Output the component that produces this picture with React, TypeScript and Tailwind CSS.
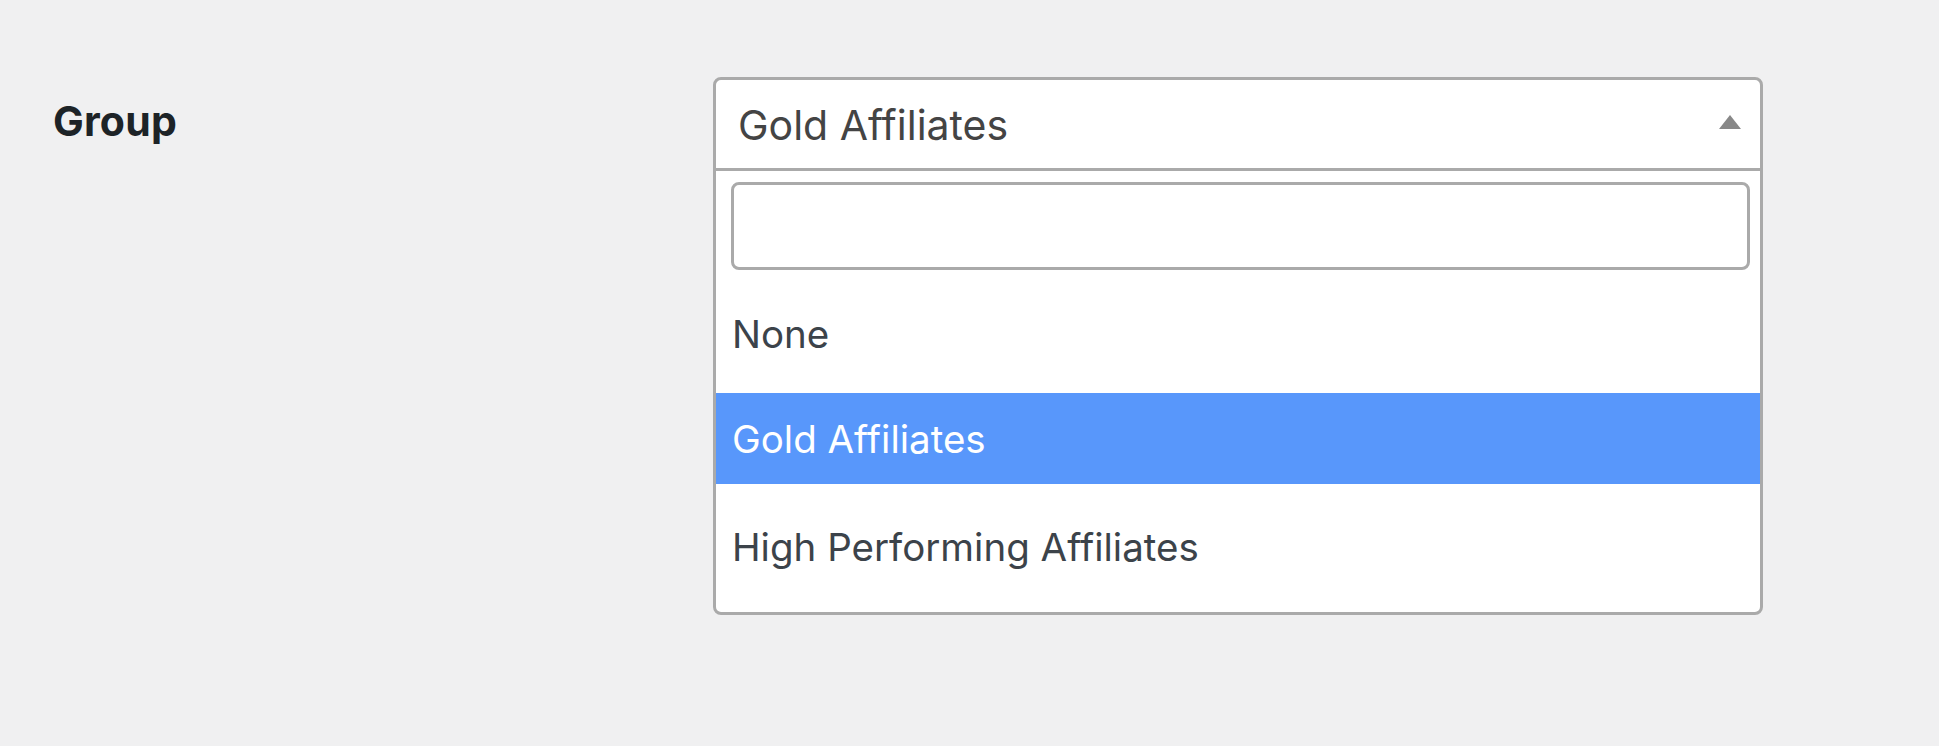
import { useState } from 'react';

const options = ['None', 'Gold Affiliates', 'High Performing Affiliates'];

const App = () => {
  const [selected] = useState('Gold Affiliates');
  const [query, setQuery] = useState('');

  return (
    <div className="min-h-[746px] bg-[#f0f0f1] flex items-start pt-[77px] pl-[53px] font-['Inter',sans-serif]">
      <div className="w-[660px] pt-[19px] text-[41px] leading-[50px] font-bold text-[#1d2327] tracking-[0.2px]">Group</div>

      <div className="w-[1050px] bg-white border-[3px] border-[#aaaaaa] rounded-[8px] overflow-hidden">
        {/* current value */}
        <div className="h-[91px] flex items-center justify-between pl-[22px] pr-[18px] border-b-[3px] border-[#aaaaaa]">
          <span className="text-[41px] leading-[50px] text-[#444444] pt-[1px]">{selected}</span>
          <svg width="24" height="16" viewBox="0 0 24 16" className="-mt-[5px]">
            <polygon points="12,1 23,15 1,15" fill="#888888" />
          </svg>
        </div>

        {/* search */}
        <div className="pt-[11px] pl-[15px] pr-[10px]">
          <input
            value={query}
            onChange={(e) => setQuery(e.target.value)}
            className="block w-full h-[88px] border-[3px] border-[#aaaaaa] rounded-[8px] outline-none px-4 text-[38px]"
          />
        </div>

        {/* results */}
        <ul className="text-[38.5px] leading-[50px] text-[#3c434a]">
          {options.map((opt, i) => (
            <li
              key={opt}
              className={
                opt === selected
                  ? 'h-[91px] flex items-center pl-[16px] bg-[#5897fb] text-white'
                  : i === 0
                    ? 'h-[123px] flex items-center pl-[16px] pt-[4px]'
                    : 'h-[128px] flex items-center pl-[16px] pb-[2px]'
              }
            >
              {opt}
            </li>
          ))}
        </ul>
      </div>
    </div>
  );
};

export default App;
